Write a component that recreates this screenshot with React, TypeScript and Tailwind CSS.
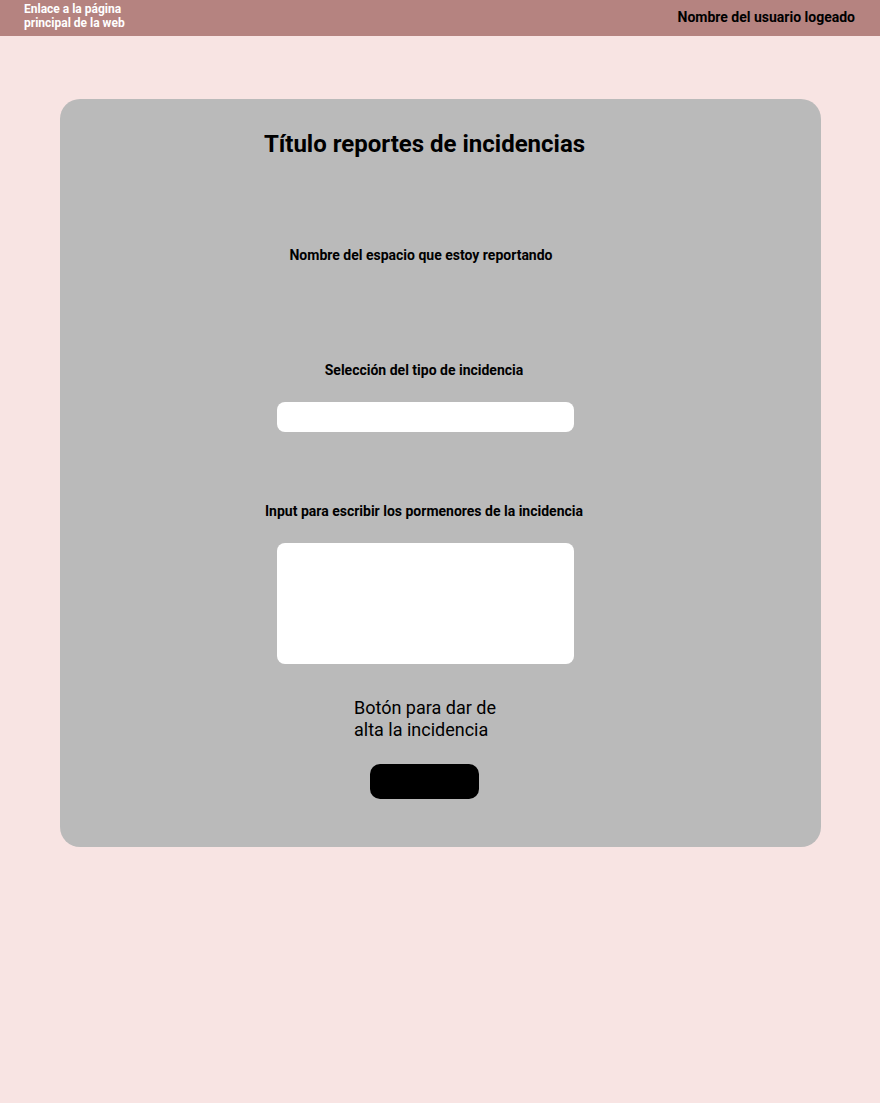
export default function App() {
  return (
    <div
      className="min-h-[1103px] bg-[#f8e4e3] text-black"
      style={{ fontFamily: "Roboto, 'Liberation Sans', sans-serif" }}
    >
      <header className="flex h-9 items-start justify-between bg-[#b58380] pl-6 pr-[25px]">
        <a href="#" className="mt-[2px] text-xs font-bold leading-[14px] text-white">
          Enlace a la página
          <br />
          principal de la web
        </a>
        <span className="mt-[9px] text-sm font-bold leading-4">
          Nombre del usuario logeado
        </span>
      </header>

      <main className="px-[60px] pt-[63px]">
        <section className="flex h-[748px] w-[761px] flex-col items-center rounded-[20px] bg-[#bababa] pr-[31px] pt-[31px]">
          <h1 className="mr-[1px] text-2xl font-bold leading-7">Título reportes de incidencias</h1>

          <p className="mr-[8px] mt-[88px] text-sm font-bold leading-[18px]">
            Nombre del espacio que estoy reportando
          </p>

          <p className="mr-[2px] mt-[97px] text-sm font-bold leading-[18px]">
            Selección del tipo de incidencia
          </p>
          <div className="mt-[23px] h-[30px] w-[297px] rounded-lg bg-white" />

          <p className="mr-[2px] mt-[70px] text-sm font-bold leading-[18px]">
            Input para escribir los pormenores de la incidencia
          </p>
          <div className="mt-[23px] h-[121px] w-[297px] rounded-lg bg-white" />

          <p className="ml-[4px] mt-[33px] w-[146px] text-lg leading-[22px]">
            Botón para dar de alta la incidencia
          </p>
          <button className="mr-[2px] mt-[23px] h-[35px] w-[109px] rounded-[10px] bg-black" />
        </section>
      </main>
    </div>
  );
}
